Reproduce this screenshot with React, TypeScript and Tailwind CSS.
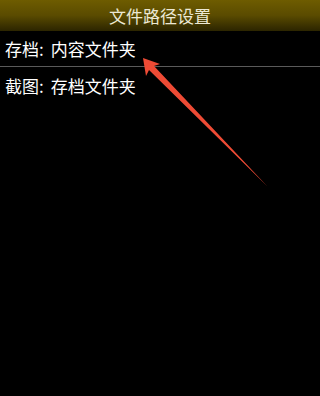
export default function App() {
  const font = { fontFamily: '"Noto Sans CJK SC", "Noto Sans", sans-serif' };
  return (
    <div className="relative w-[320px] h-[396px] bg-black overflow-hidden" style={font}>
      {/* Title bar */}
      <div className="h-[31px] flex items-center justify-center bg-gradient-to-b from-[#6e5c00] via-[#5a4b00] to-[#2c2500] text-[#ece8d4] text-[17px] leading-none">
        文件路径设置
      </div>

      {/* Rows */}
      <div className="h-[36px] flex items-center px-[5px] text-white text-[17px] leading-none border-b border-[#5a5a5a]">
        <span>存档:</span>
        <span className="ml-[7px]">内容文件夹</span>
      </div>
      <div className="h-[37px] flex items-center px-[5px] text-white text-[17px] leading-none">
        <span>截图:</span>
        <span className="ml-[7px]">存档文件夹</span>
      </div>

      {/* Annotation arrow */}
      <svg className="absolute left-0 top-0 pointer-events-none" width="320" height="396" viewBox="0 0 320 396">
        <polygon points="143,58 160,64 154,66 267,186 149,70 146,76" fill="#ee4b35" />
      </svg>
    </div>
  );
}
